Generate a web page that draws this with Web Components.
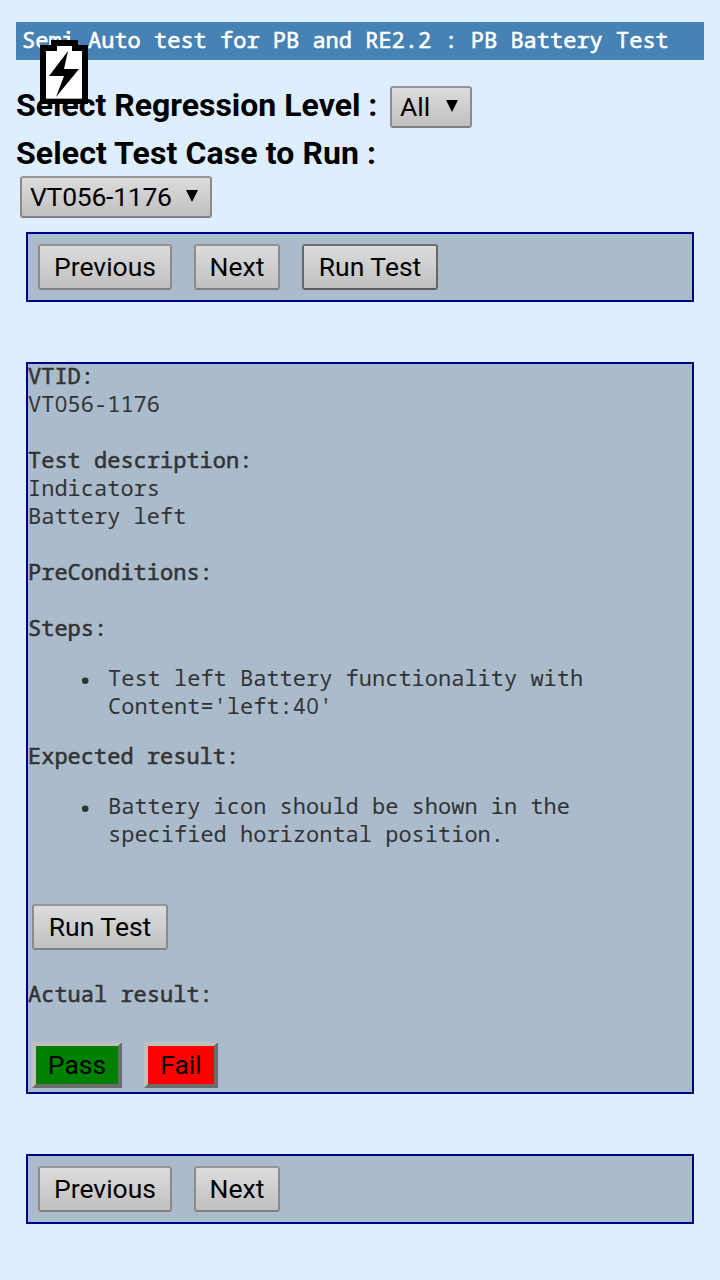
<!DOCTYPE html>
<html lang="en">
<head>
<meta charset="utf-8">
<title>PB Battery Test</title>
<style>
html,body{margin:0;background:#def;}
body{width:720px;height:1280px;overflow:hidden;font-family:Roboto,sans-serif;color:#000}
</style>
</head>
<body>
<test-page></test-page>
<script>
function define(name, html) {
  const template = document.createElement('template');
  template.innerHTML = html;
  customElements.define(name, class extends HTMLElement {
    constructor() {
      super();
      this.attachShadow({ mode: 'open' }).appendChild(template.content.cloneNode(true));
    }
  });
}

define('push-button', `
<style>
:host{display:block;box-sizing:border-box;width:var(--w);height:46px;border:2px solid;border-color:#959595 #8b8b8b #7f7f7f #8b8b8b;border-radius:3px;background:linear-gradient(#dcdcdc,#c0c0c0);font:400 26.5px/42px Roboto,sans-serif;color:#000;text-align:center;white-space:nowrap}
:host([focused]){border-color:#6e6e6e #666 #5c5c5c #666}
:host([tone]){border:4px solid;border-color:#c0c0c0 #6c6c6c #6c6c6c #c0c0c0;border-radius:0;line-height:38px}
:host([tone=pass]){background:#008000}
:host([tone=fail]){background:#f00}
</style><slot></slot>`);

define('drop-down', `
<style>
:host{display:flex;box-sizing:border-box;width:var(--w);height:42px;border:2px solid;border-color:#959595 #8b8b8b #7f7f7f #8b8b8b;border-radius:3px;background:linear-gradient(#dcdcdc,#c0c0c0);font:400 26.5px/38px Roboto,sans-serif;justify-content:space-between;padding:0 12px 0 8px;white-space:nowrap;letter-spacing:var(--ls,0)}
svg{width:12px;height:12px;margin-top:12px}
</style><span><slot></slot></span><svg viewBox="0 0 12 12"><path d="M0 0h12L6 12z"/></svg>`);

define('title-bar', `
<style>
:host{display:block;box-sizing:border-box;height:38px;background:#4682b4;color:#fff;font:22px/34px "Noto Sans Mono","DejaVu Sans Mono",monospace;-webkit-text-stroke:.6px #fff;padding-left:6px;white-space:nowrap}
</style><slot></slot>`);

define('button-bar', `
<style>
:host{display:flex;gap:22px;box-sizing:border-box;border:2px solid #00008b;background:#abc;padding:10px;margin:0 10px}
</style><slot></slot>`);

define('text-zero', `
<style>
:host{display:inline-block;width:13.2px;font-family:"Open Sans",sans-serif;font-size:22px;line-height:20px;text-align:center}
</style><slot></slot>`);

define('battery-icon', `
<style>
:host{display:block;position:absolute;left:40px;top:40px;width:48px;height:64px}
svg{display:block}
</style>
<svg width="48" height="64" viewBox="0 0 48 64"><path d="M11 0h27v5h10v59H0V5h11z"/><path fill="#fff" d="M17 6h15v5h10v47H6V11h11z"/><path fill="#aaa" d="M6 58h36v1H6z"/><path d="M28 11L9 36h15l-8 21L39 29H24z"/></svg>`);

define('test-details', `
<style>
:host{display:block;box-sizing:border-box;height:732px;border:2px solid #00008b;background:#abc;margin:60px 10px;color:#333;font:400 22px/28px "Noto Sans Mono","DejaVu Sans Mono",monospace}
.copy{margin-top:-3px}
div{white-space:nowrap}
h2{font:inherit;margin:0;-webkit-text-stroke:.55px #333}
p{margin:0 0 28px}
ul{margin:22px 0;padding-left:80px}
li{list-style:none;display:flex}
li svg{width:8px;height:8px;margin:13px 19px 0 -27px;flex:none}
push-button{margin:0 0 0 4px}
.run{margin-top:57px}
.actual{margin-top:29px}
.row{display:flex;gap:22px;margin:35px 0 0 4px}
.row push-button{margin:0}
</style>
<div class="copy">
<h2>VTID:</h2><p>VT<text-zero>0</text-zero>56-1176</p>
<h2>Test description:</h2><p>Indicators<br>Battery left</p>
<h2>PreConditions:</h2><p></p>
<h2>Steps:</h2>
<ul><li><svg viewBox="0 0 8 8"><circle cx="4.2" cy="4.7" r="3.3" fill="#333"/></svg><span>Test left Battery functionality with<br>Content='left:4<text-zero>0</text-zero>'</span></li></ul>
<h2>Expected result:</h2>
<ul><li><svg viewBox="0 0 8 8"><circle cx="4.2" cy="4.7" r="3.3" fill="#333"/></svg><span>Battery icon should be shown in the<br>specified horizontal position.</span></li></ul>
</div>
<push-button class="run" style="--w:136px">Run Test</push-button>
<h2 class="actual">Actual result:</h2>
<div class="row"><push-button tone="pass" style="--w:90px">Pass</push-button><push-button tone="fail" style="--w:74px">Fail</push-button></div>`);

define('test-page', `
<style>
:host{display:block;box-sizing:border-box;height:1280px;padding:22px 16px 0}
.level{display:flex;height:42px;margin-top:26px}
b{display:block;font:bold 32px/38px Roboto,sans-serif;white-space:nowrap}
.level b{width:374px}
.case{margin-top:6px;letter-spacing:.1px}
.pick{margin:4px 0 14px 4px}
</style>
<title-bar>Semi Auto test for PB and RE2.2 : PB Battery Test</title-bar>
<div class="level"><b>Select Regression Level :</b><drop-down style="--w:82px">All</drop-down></div>
<b class="case">Select Test Case to Run :</b>
<drop-down class="pick" style="--w:192px;--ls:-.25px">VT056-1176</drop-down>
<button-bar><push-button style="--w:134px">Previous</push-button><push-button style="--w:86px">Next</push-button><push-button focused style="--w:136px">Run Test</push-button></button-bar>
<test-details></test-details>
<button-bar><push-button style="--w:134px">Previous</push-button><push-button style="--w:86px">Next</push-button></button-bar>
<battery-icon></battery-icon>`);
</script>
</body>
</html>
